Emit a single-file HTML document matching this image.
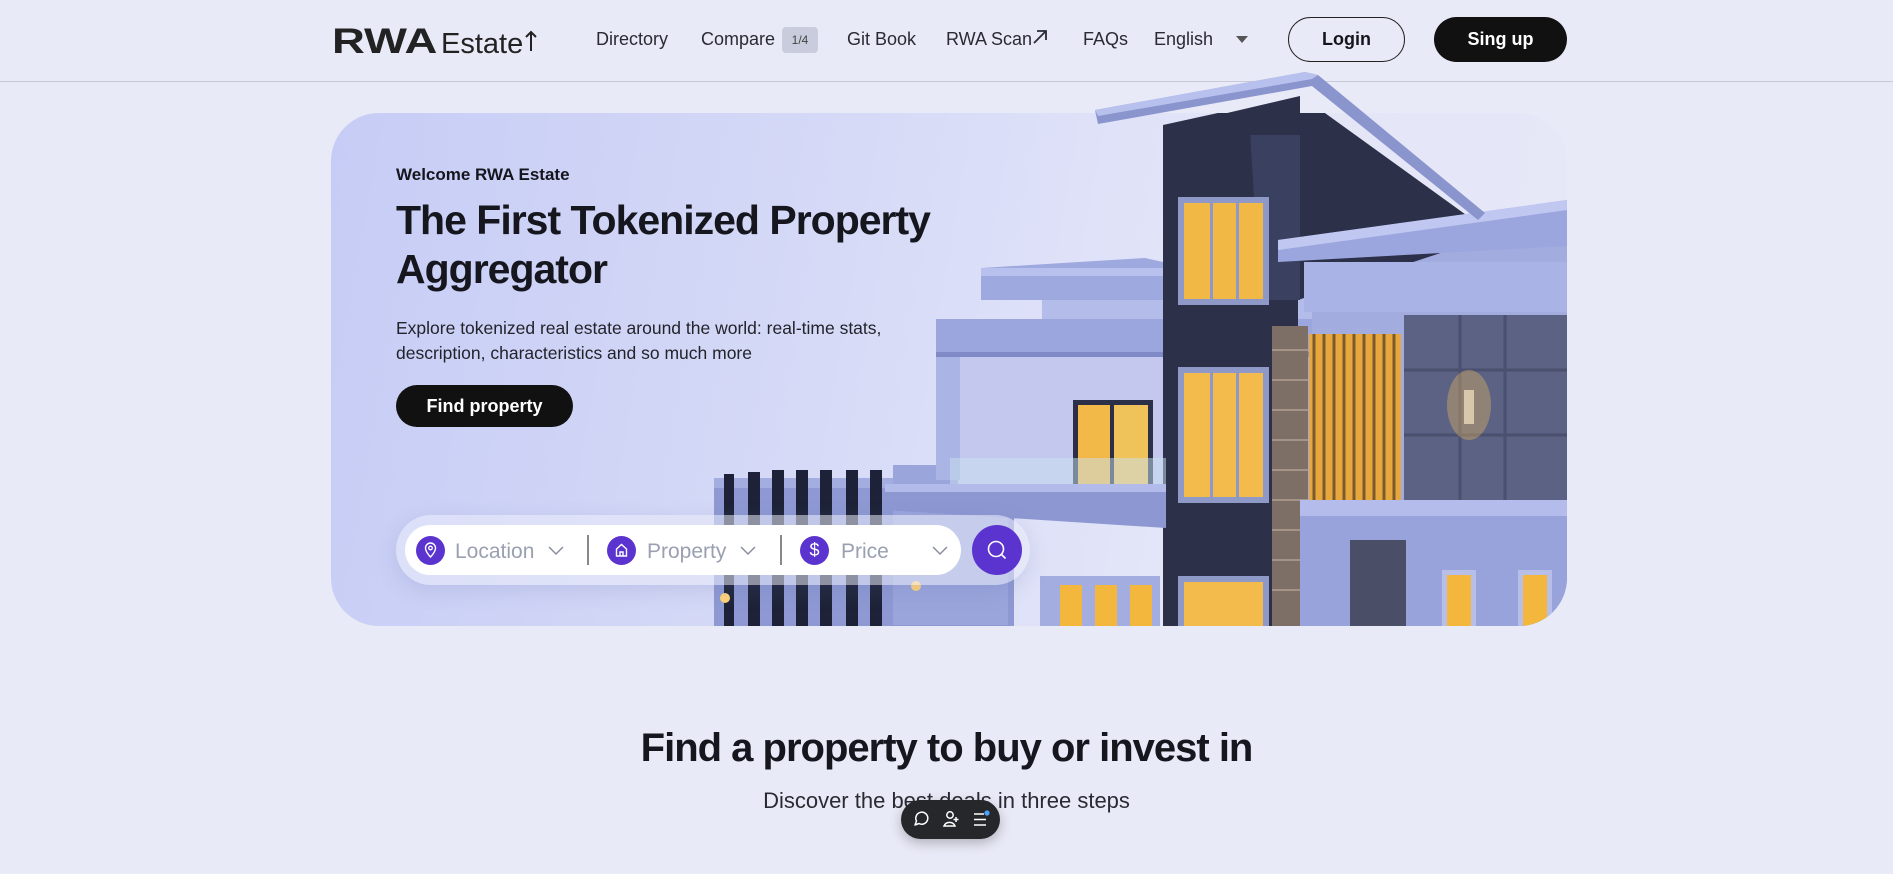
<!DOCTYPE html>
<html><head><meta charset="utf-8">
<style>
*{margin:0;padding:0;box-sizing:border-box}
body{width:1893px;height:874px;overflow:hidden;background:#e9eaf7;font-family:"Liberation Sans",sans-serif;color:#15151d;position:relative}
.hdr{position:absolute;left:0;top:0;width:1893px;height:82px;border-bottom:1px solid #c9cad8}
.logo{position:absolute;left:332px;top:22px;display:flex;align-items:baseline}
.logo b{font-size:35px;font-weight:900;letter-spacing:0px;color:#222;display:inline-block;transform:scaleX(1.3);transform-origin:left;margin-right:23px}
.logo span{font-size:29px;margin-left:5px;color:#222}
.nav{position:absolute;top:29px;font-size:18px;color:#2a2a33}
.badge{position:absolute;left:782px;top:27px;width:36px;height:26px;background:#c9ccdc;border-radius:4px;font-size:12px;text-align:center;line-height:26px;color:#444}
.btn{position:absolute;top:17px;height:45px;border-radius:23px;font-size:18px;font-weight:bold;text-align:center;line-height:43px}
.hero{position:absolute;left:331px;top:113px;width:1236px;height:513px;border-radius:48px;overflow:hidden;background:linear-gradient(100deg,#c6ccf5 0%,#d6daf7 40%,#e4e6f8 70%,#e6e8f8 100%)}
.sb{position:absolute;left:396px;top:515px;width:634px;height:70px;border-radius:35px;background:rgba(235,237,250,.55);box-shadow:0 6px 20px rgba(100,110,170,.18)}
.sbi{position:absolute;left:405px;top:525px;width:556px;height:50px;border-radius:25px;background:#fff}
.ic{position:absolute;top:536px;width:29px;height:29px;border-radius:50%;background:#5b34d0}
.lbl{position:absolute;top:540px;font-size:21px;color:#9aa0b2}
</style></head><body>
<div class="hdr"></div>
<div class="logo"><b>RWA</b><span>Estate</span><svg width="14" height="24" style="margin-left:1px" viewBox="0 0 14 24"><path d="M7 22V3M2 8l5-5 5 5" stroke="#222" stroke-width="2" fill="none"/></svg></div>
<div class="nav" style="left:596px">Directory</div>
<div class="nav" style="left:701px">Compare</div>
<div class="badge">1/4</div>
<div class="nav" style="left:847px">Git Book</div>
<div class="nav" style="left:946px">RWA Scan</div>
<svg style="position:absolute;left:1032px;top:29px" width="16" height="16" viewBox="0 0 16 16"><path d="M2 14L14 2M5 2h9v9" stroke="#2a2a33" stroke-width="1.8" fill="none"/></svg>
<div class="nav" style="left:1083px">FAQs</div>
<div class="nav" style="left:1154px">English</div>
<svg style="position:absolute;left:1236px;top:36px" width="12" height="8"><path d="M0 0h12L6 7z" fill="#555"/></svg>
<div class="btn" style="left:1288px;width:117px;border:1.5px solid #222;color:#15151d">Login</div>
<div class="btn" style="left:1434px;width:133px;background:#111;color:#fff;line-height:45px">Sing up</div>

<div class="hero">
<svg width="1236" height="513" viewBox="331 113 1236 513" style="position:absolute;left:0;top:0">
 <rect x="714" y="478" width="300" height="150" fill="#8e99d3"/>
 <rect x="714" y="478" width="300" height="10" fill="#a3addf"/>
 <g fill="#1e2238">
  <rect x="724" y="474" width="10" height="152"/><rect x="748" y="472" width="12" height="154"/><rect x="772" y="470" width="12" height="156"/><rect x="796" y="470" width="12" height="156"/><rect x="820" y="470" width="12" height="156"/><rect x="846" y="470" width="12" height="156"/><rect x="870" y="470" width="12" height="156"/>
 </g>
 <rect x="893" y="465" width="115" height="160" fill="#9aa5dc"/>
 <circle cx="725" cy="598" r="5" fill="#ffd27a"/><circle cx="916" cy="586" r="5" fill="#ffd27a"/>
 <rect x="1280" y="240" width="287" height="390" fill="#a2acdf"/>
 <rect x="1042" y="290" width="270" height="40" fill="#b4bdea"/>
 <rect x="958" y="350" width="215" height="140" fill="#c4c8ee"/>
 <rect x="1073" y="400" width="80" height="105" fill="#2b3048"/>
 <rect x="1078" y="405" width="32" height="95" fill="#f3b948"/><rect x="1114" y="405" width="34" height="95" fill="#f0c25a"/>
 <rect x="936" y="350" width="24" height="130" fill="#aab4e5"/>
 <rect x="936" y="319" width="376" height="37" fill="#9ba6de"/>
 <rect x="936" y="352" width="376" height="5" fill="#7f8ac6"/>
 <polygon points="981,268 1145,258 1163,262 1163,300 981,300" fill="#9ea9df"/>
 <rect x="981" y="268" width="182" height="8" fill="#b8c0ee"/>
 <polygon points="1163,125 1300,95 1480,225 1480,240 1298,300 1163,300" fill="#2c3149"/>
 <rect x="1163" y="130" width="135" height="496" fill="#2c3149"/>
 <polygon points="1250,130 1300,110 1300,300 1260,300" fill="#3a4060"/>
 <rect x="1178" y="197" width="91" height="108" fill="#8f99c8"/>
 <rect x="1184" y="203" width="79" height="96" fill="#f1b846"/>
 <rect x="1210" y="203" width="3" height="96" fill="#8f99c8"/><rect x="1236" y="203" width="3" height="96" fill="#8f99c8"/>
 <rect x="1178" y="367" width="91" height="136" fill="#8f99c8"/>
 <rect x="1184" y="373" width="79" height="124" fill="#f3bb4b"/>
 <rect x="1210" y="373" width="3" height="124" fill="#8f99c8"/><rect x="1236" y="373" width="3" height="124" fill="#8f99c8"/>
 <rect x="1178" y="576" width="91" height="60" fill="#8f99c8"/><rect x="1184" y="582" width="79" height="50" fill="#f3bb4b"/>
 <rect x="1272" y="326" width="36" height="300" fill="#7d6e66"/>
 <g stroke="#a59388" stroke-width="2"><path d="M1272 350h36M1272 380h36M1272 410h36M1272 440h36M1272 470h36M1272 500h36M1272 530h36M1272 560h36M1272 590h36"/></g>
 <rect x="1309" y="334" width="92" height="170" fill="#e8a73c"/>
 <g stroke="#7a5b2e" stroke-width="3"><path d="M1314 334v170M1324 334v170M1334 334v170M1344 334v170M1354 334v170M1364 334v170M1374 334v170M1384 334v170M1394 334v170"/></g>
 <rect x="1404" y="315" width="163" height="185" fill="#5b6283"/>
 <g stroke="#4a506e" stroke-width="3"><path d="M1460 315v185M1505 315v185M1404 370h163M1404 435h163"/></g>
 <rect x="1464" y="390" width="10" height="34" fill="#c9cbd6"/>
 <ellipse cx="1469" cy="405" rx="22" ry="35" fill="#f6c15f" opacity=".35"/>
 <polygon points="1278,240 1567,200 1567,246 1278,262" fill="#9ba6de"/>
 <polygon points="1278,240 1567,200 1567,210 1278,250" fill="#c0c7f0"/>
 <rect x="1304" y="262" width="263" height="50" fill="#a9b3e6"/>
 <rect x="1300" y="500" width="267" height="16" fill="#b3bcea"/>
 <rect x="1300" y="516" width="267" height="110" fill="#98a3dc"/>
 <rect x="1350" y="540" width="56" height="90" fill="#4a4e66"/>
 <rect x="1442" y="570" width="34" height="60" fill="#b7bfe9"/><rect x="1447" y="575" width="24" height="55" fill="#f2b73c"/>
 <rect x="1518" y="570" width="34" height="60" fill="#b7bfe9"/><rect x="1523" y="575" width="24" height="55" fill="#f2b73c"/>
 <rect x="950" y="458" width="216" height="26" fill="#c9e2f0" opacity=".5"/>
 <polygon points="885,484 1166,484 1166,528 885,510" fill="#8d98d2"/>
 <rect x="885" y="484" width="281" height="8" fill="#b2bbe9"/>
 <rect x="1040" y="576" width="120" height="50" fill="#a3addf"/>
 <rect x="1060" y="585" width="22" height="41" fill="#f2b73c"/><rect x="1095" y="585" width="22" height="41" fill="#f2b73c"/><rect x="1130" y="585" width="22" height="41" fill="#f2b73c"/>
</svg>
</div>
<svg style="position:absolute;left:0;top:0" width="1893" height="300">
 <polygon points="1163,128 1300,96 1300,135 1163,135" fill="#2c3149"/>
 <polygon points="1095,110 1305,72 1318,75 1485,213 1478,220 1312,86 1098,124" fill="#8a95cd"/>
 <polygon points="1095,110 1305,72 1318,75 1312,79 1098,116" fill="#b8c1ee"/>
</svg>

<div style="position:absolute;left:396px;top:165px;font-size:17px;font-weight:bold">Welcome RWA Estate</div>
<div style="position:absolute;left:396px;top:196px;font-size:41px;line-height:49px;letter-spacing:-1px;font-weight:bold;color:#16161e">The First Tokenized Property<br>Aggregator</div>
<div style="position:absolute;left:396px;top:316px;font-size:17.5px;line-height:25px;color:#23232b">Explore tokenized real estate around the world: real-time stats,<br>description, characteristics and so much more</div>
<div style="position:absolute;left:396px;top:385px;width:177px;height:42px;border-radius:21px;background:#111;color:#fff;font-weight:bold;font-size:18px;text-align:center;line-height:42px">Find property</div>

<div class="sb"></div>
<div class="sbi"></div>
<div class="ic" style="left:416px"><svg width="29" height="29" viewBox="0 0 29 29"><path d="M14.5 21s-5-5-5-9a5 5 0 0 1 10 0c0 4-5 9-5 9z" stroke="#fff" stroke-width="1.4" fill="none"/><circle cx="14.5" cy="12" r="1.8" stroke="#fff" stroke-width="1.3" fill="none"/></svg></div>
<div class="lbl" style="left:455px">Location</div>
<svg style="position:absolute;left:548px;top:546px" width="16" height="10"><path d="M1 1l7 7 7-7" stroke="#8a8fa0" stroke-width="1.5" fill="none"/></svg>
<div style="position:absolute;left:587px;top:535px;width:1.5px;height:30px;background:#888"></div>
<div class="ic" style="left:607px"><svg width="29" height="29" viewBox="0 0 29 29"><path d="M9.5 20v-7l5-4.5 5 4.5v7zM13 20v-4h3v4" stroke="#fff" stroke-width="1.4" fill="none"/></svg></div>
<div class="lbl" style="left:647px">Property</div>
<svg style="position:absolute;left:740px;top:546px" width="16" height="10"><path d="M1 1l7 7 7-7" stroke="#8a8fa0" stroke-width="1.5" fill="none"/></svg>
<div style="position:absolute;left:780px;top:535px;width:1.5px;height:30px;background:#888"></div>
<div class="ic" style="left:800px;color:#fff;text-align:center;line-height:29px;font-size:18px">$</div>
<div class="lbl" style="left:841px">Price</div>
<svg style="position:absolute;left:932px;top:546px" width="16" height="10"><path d="M1 1l7 7 7-7" stroke="#8a8fa0" stroke-width="1.5" fill="none"/></svg>
<div style="position:absolute;left:972px;top:525px;width:50px;height:50px;border-radius:50%;background:#5b34d0"><svg width="50" height="50"><circle cx="24" cy="24" r="7.5" stroke="#fff" stroke-width="1.6" fill="none"/><path d="M29.5 29.5l4 4" stroke="#fff" stroke-width="1.6"/></svg></div>

<div style="position:absolute;left:0;width:1893px;top:726px;text-align:center;font-size:40px;font-weight:bold;letter-spacing:-1px;color:#16161e">Find a property to buy or invest in</div>
<div style="position:absolute;left:0;width:1893px;top:788px;text-align:center;font-size:22px;color:#2a2a33">Discover the best deals in three steps</div>
<div style="position:absolute;left:901px;top:800px;width:99px;height:39px;border-radius:20px;background:#26272b;box-shadow:0 4px 12px rgba(0,0,0,.25)">
<svg width="99" height="39" viewBox="0 0 99 39"><path d="M14 25l1.5-4a6 6 0 1 1 2.5 2.5z" stroke="#fff" stroke-width="1.5" fill="none" stroke-linejoin="round"/><circle cx="49" cy="15" r="3.2" stroke="#fff" stroke-width="1.5" fill="none"/><path d="M43 26a6 6 0 0 1 11 0zM55 17v5M52.5 19.5h5" stroke="#fff" stroke-width="1.5" fill="none"/><path d="M73 14h10M73 19.5h12M73 25h12" stroke="#fff" stroke-width="1.6"/><circle cx="86" cy="13" r="2.6" fill="#4aa3ff"/></svg></div>
</body></html>
